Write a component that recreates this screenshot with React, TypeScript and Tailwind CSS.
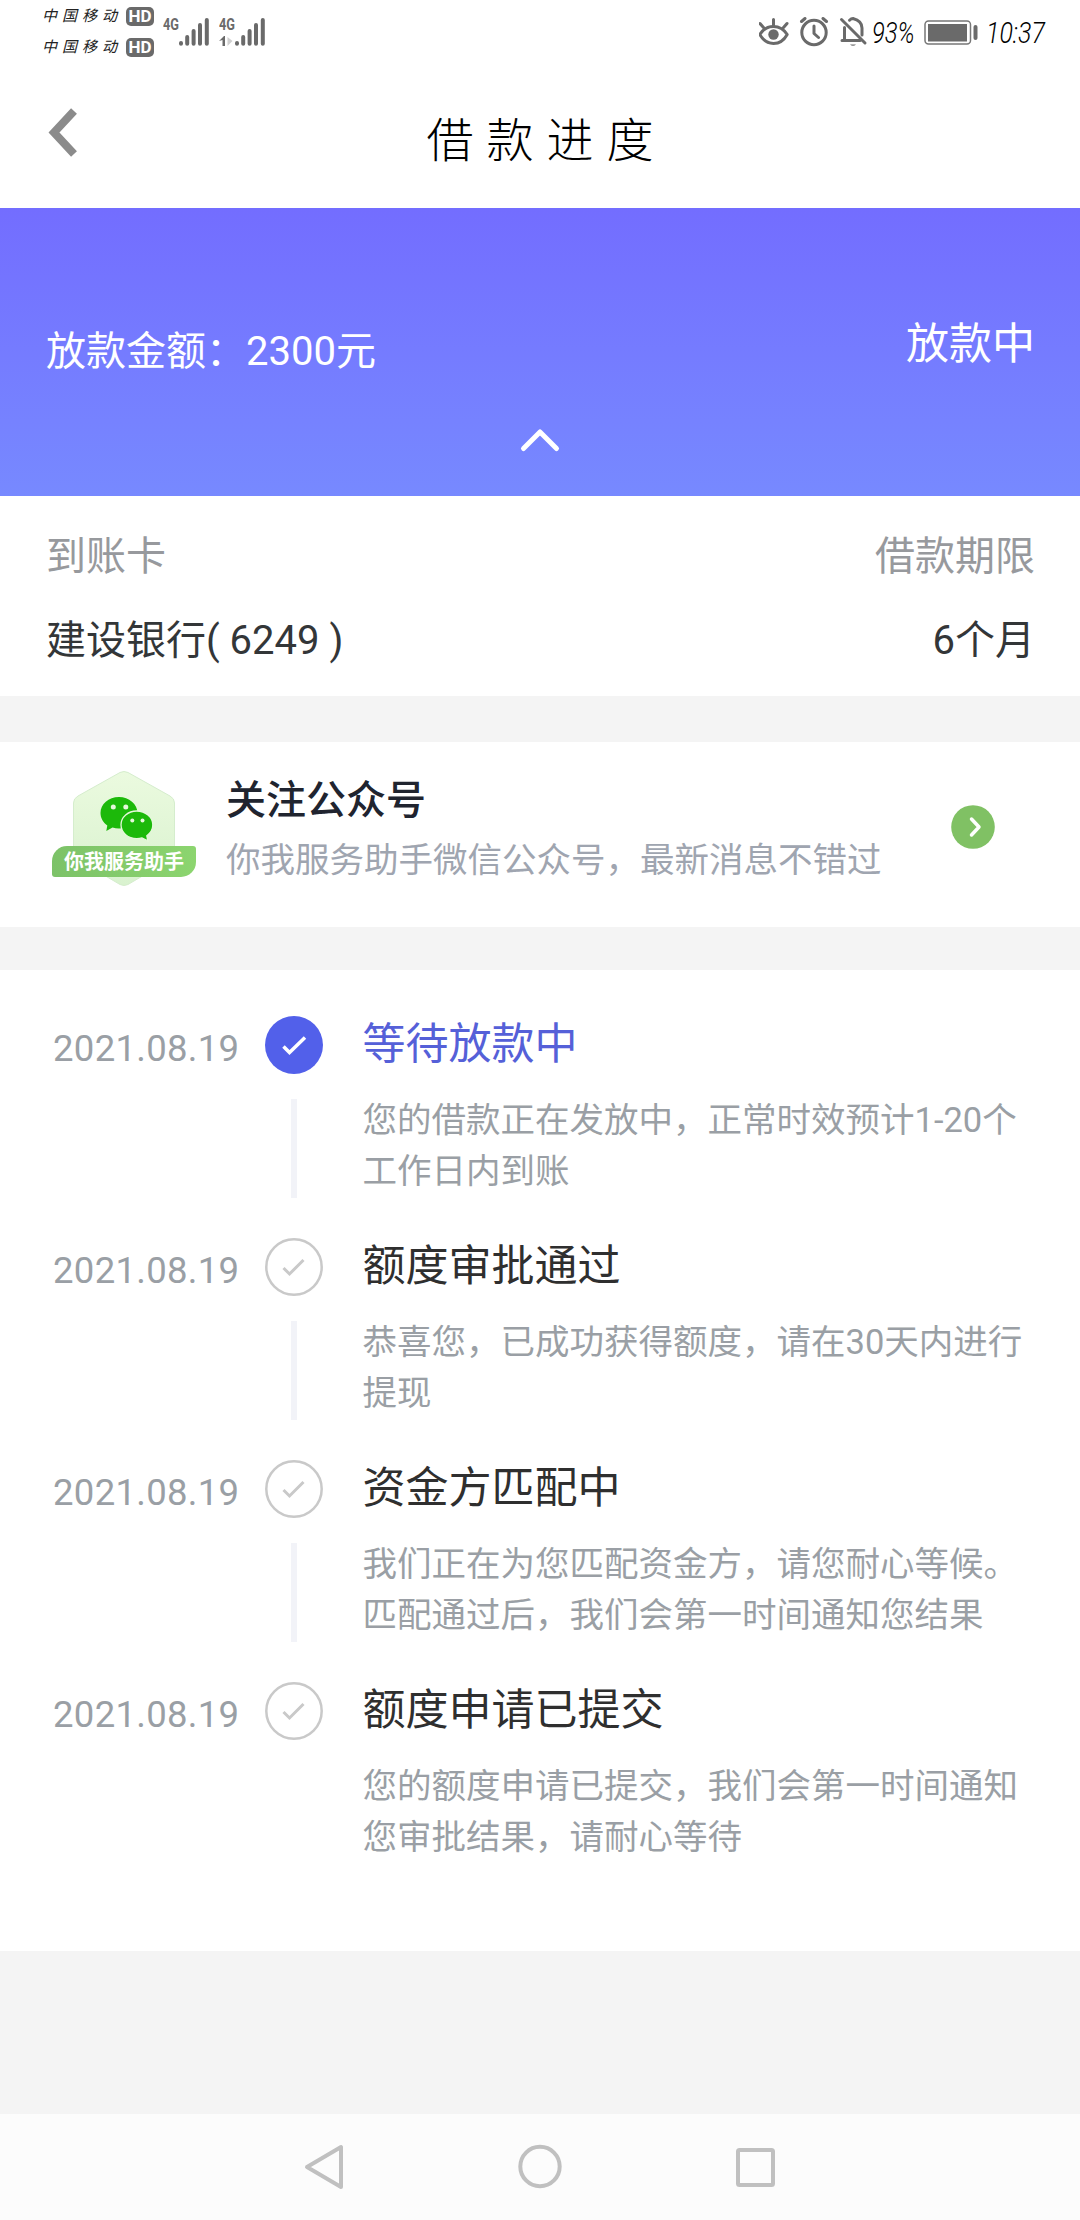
const steps = [
  { date: "2021.08.19", title: "等待放款中", lines: ["您的借款正在发放中，正常时效预计1-20个", "工作日内到账"], active: true },
  { date: "2021.08.19", title: "额度审批通过", lines: ["恭喜您，已成功获得额度，请在30天内进行", "提现"] },
  { date: "2021.08.19", title: "资金方匹配中", lines: ["我们正在为您匹配资金方，请您耐心等候。", "匹配通过后，我们会第一时间通知您结果"] },
  { date: "2021.08.19", title: "额度申请已提交", lines: ["您的额度申请已提交，我们会第一时间通知", "您审批结果，请耐心等待"] },
];

function Carrier() {
  return (
    <div className="flex h-[31px] items-center">
      <span className="w-[84px] text-[15px] leading-[31px] tracking-[5px] italic text-[#222] whitespace-nowrap">中国移动</span>
      <span className="flex h-[19px] w-7 items-center justify-center rounded-[5px] bg-[#6a6a6a] text-[17px] leading-none font-bold text-white">
        HD
      </span>
    </div>
  );
}

function Signal({ arrows = false }: { arrows?: boolean }) {
  return (
    <div className="relative h-[30px] w-[47px]">
      <span className="absolute left-0 top-0 origin-left scale-x-75 text-[17px] leading-[15px] font-bold text-[#6a6a6a]">4G</span>
      <svg className="block h-[30px] w-[47px]" viewBox="0 0 47 30" fill="none" stroke="#6a6a6a" strokeWidth="4" strokeLinecap="round">
        <path d="M18 26v.8M24.2 20v6.8M30.6 14v12.8M37 8v18.8M43.8 3v23.8" />
        {arrows && (
          <>
            <path d="M0 24l5-5h1v10H3.500v-6z" fill="#6a6a6a" stroke="none" />
            <path d="M8.500 20l5 4-5 5z" fill="#d0d0d0" stroke="none" />
          </>
        )}
      </svg>
    </div>
  );
}

function StatusBar() {
  return (
    <div className="flex h-16 items-start justify-between pl-[42px] pr-[36px]">
      <div className="flex">
        <div className="pt-[1px]">
          <Carrier />
          <Carrier />
        </div>
        <div className="flex gap-[9px] pl-[9px] pt-[17px]">
          <Signal />
          <Signal arrows />
        </div>
      </div>
      <div className="flex pt-[17px]">
        <svg className="h-[30px] w-[110px]" viewBox="1 0 110 30" fill="none" stroke="#6a6a6a" strokeWidth="3" strokeLinecap="round" strokeLinejoin="round">
          <path d="M1.800 17.500C5.500 11.800 10 9.500 15.500 9.500s10 2.300 13.700 8c-3.700 6.700-8.200 9-13.700 9s-10-2.300-13.700-9z" />
          <circle cx="15.500" cy="17.500" r="5.200" fill="#6a6a6a" stroke="none" />
          <path d="M15.500 2.500v6M2 6.500l3.500 4M29 6.500l-3.500 4" />
          <circle cx="56" cy="15.500" r="12.200" />
          <path d="M56 9v7.500l4.500 4M43.500 4.500l3.500-3M68.500 4.500l-3.500-3" />
          <path d="M83.500 2.500l23.500 23.500M84 23.500h18M86.500 23V10.500M91.500 3.200c1-1 2-1.700 3.500-1.700 5.500 1.500 9 5 9 9.500V18" />
          <path d="M92 27.500a4 4 0 0 0 6 0z" fill="#6a6a6a" stroke="none" />
        </svg>
        <span className="w-[46px] pl-[3px] text-[29px] leading-[32px]">
          <span className="block origin-left scale-x-[.82] font-light italic text-black">93%</span>
        </span>
        <svg className="ml-[9px] mt-[3px] h-[25px] w-[54px]" viewBox="0 0 54 25">
          <rect x="1" y="1" width="45.500" height="23" rx="3.500" fill="none" stroke="#777" strokeWidth="1.500" />
          <rect x="4" y="4" width="39" height="17.500" fill="#6a6a6a" />
          <rect x="49.500" y="5" width="4" height="15" rx="2" fill="#6a6a6a" />
        </svg>
        <span className="w-[66px] pl-[8px] text-[29px] leading-[32px]">
          <span className="block origin-left scale-x-[.86] font-light italic text-black">10:37</span>
        </span>
      </div>
    </div>
  );
}

function FollowBanner() {
  return (
    <section className="flex h-[185px] bg-white pl-[52px]">
      <div className="relative mt-[28px] h-[118px] w-36">
        <svg className="absolute left-0 top-0 h-[118px] w-36" viewBox="0 0 144 118">
          <defs>
            <linearGradient id="hex" x1="0" y1="0" x2="0" y2="1">
              <stop offset="0" stopColor="#ebfadf" />
              <stop offset="1" stopColor="#d9f2cf" />
            </linearGradient>
          </defs>
          <path d="M68 2.500q4-2 8 0l42 23.500q4.500 2.500 4.500 7v50q0 4-4 6.500L76 114.500q-4 2-8 0L25.500 89.500q-4-2.500-4-6.500V33q0-4.500 4.500-7z" fill="url(#hex)" stroke="#d5edcd" />
          <path d="M67 27c-10.500 0-18.500 7-18.500 16 0 5 2.600 9.500 6.800 12.500L54.300 61l6.200-3.400c2 .6 4.200.9 6.500.9 10 0 18.500-6.500 18.500-15.500S77 27 67 27z" fill="#1cb90a" />
          <path d="M84.700 41c-8.600 0-15.700 6-15.700 13.800s7.100 13.800 15.700 13.800c1.900 0 3.700-.2 5.300-.7l5.800 3-1-5.200c3.600-2.500 6-6.400 6-10.900C100.800 47 93.300 41 84.700 41z" fill="#1cb90a" stroke="#e6f8db" strokeWidth="1.300" />
          <g fill="#e6f8db">
            <circle cx="61.300" cy="37" r="2.500" />
            <circle cx="73.800" cy="37" r="2.500" />
            <circle cx="80.300" cy="50.500" r="2" />
            <circle cx="90.500" cy="50.500" r="2" />
          </g>
        </svg>
        <div className="absolute left-0 top-[76px] h-[31px] w-36 rounded-[3px] rounded-tl-[15px] rounded-br-[15px] bg-linear-to-r from-[#7cc268] to-[#8cd56f] text-center text-[20px] leading-[33px] font-bold text-white">
          你我服务助手
        </div>
      </div>
      <div className="w-[670px] pl-[30px] pt-[30px]">
        <h2 className="text-[40px] leading-[58px] font-medium text-[#20242f]">关注公众号</h2>
        <p className="text-[34.500px] leading-[60px] text-[#9fa5b0] whitespace-nowrap">你我服务助手微信公众号，最新消息不错过</p>
      </div>
      <svg className="ml-[85px] mt-[63px] size-[44px]" viewBox="0 0 44 44" fill="none">
        <circle cx="22" cy="22" r="21.800" fill="#80c164" />
        <path d="M20.500 14l7.500 8-7.500 8" stroke="#fff" strokeWidth="3.500" strokeLinecap="round" strokeLinejoin="round" />
      </svg>
    </section>
  );
}

function StepMark({ active }: { active?: boolean }) {
  return (
    <svg className="h-[58px] w-[58px]" viewBox="0 0 58 58" fill="none">
      {active ? (
        <>
          <circle cx="29" cy="29" r="29" fill="#5260ea" />
          <path d="M18.500 30.500l6 6L40 21.500" stroke="#fff" strokeWidth="3.500" />
        </>
      ) : (
        <>
          <circle cx="29" cy="29" r="27.700" stroke="#c9c9c9" strokeWidth="2.500" />
          <path d="M18.500 30l6 6L38.500 22" stroke="#c9c9c9" strokeWidth="3" />
        </>
      )}
    </svg>
  );
}

export default function App() {
  return (
    <div className="flex h-[2220px] w-[1080px] flex-col overflow-hidden bg-[#f4f4f4] font-['Roboto','Noto_Sans_CJK_SC',sans-serif]">
      <header className="h-[208px] bg-white">
        <StatusBar />
        <div className="flex h-36 items-start">
          <svg className="ml-[47px] mt-[43px] h-[52px] w-[32px]" viewBox="0 0 32 52" fill="none" stroke="#8b8b8b" strokeWidth="8">
            <path d="M27 4L7 25.500 27 47" />
          </svg>
          <h1 className="mr-[79px] mt-[42px] flex-1 text-center text-[47px] leading-[70px] font-light tracking-[13px] text-black indent-[13px]">
            借款进度
          </h1>
        </div>
      </header>

      <section className="flex h-72 flex-col items-center bg-linear-to-b from-[#736dff] to-[#7789ff] text-white">
        <div className="flex w-full items-start justify-between pl-[46px] pr-[45px] pt-[106px]">
          <span className="mt-[8px] text-[40px] leading-[60px]">放款金额：2300元</span>
          <span className="text-[43px] leading-[60px]">放款中</span>
        </div>
        <svg className="mt-[44px] h-[28px] w-[44px]" viewBox="0 0 44 28" fill="none" stroke="#fff" strokeWidth="5" strokeLinecap="round" strokeLinejoin="round">
          <path d="M5.500 22.500L22 6l16.500 16.500" />
        </svg>
      </section>

      <section className="h-[200px] bg-white pl-[46px] pr-[45px] pt-[28px] text-[40px]">
        <div className="flex justify-between leading-[66px] text-[#97999d]">
          <span>到账卡</span>
          <span>借款期限</span>
        </div>
        <div className="mt-[18px] flex justify-between leading-[66px] text-[#333638]">
          <span>建设银行( 6249 )</span>
          <span>6个月</span>
        </div>
      </section>

      <div className="h-[46px]" />
      <FollowBanner />
      <div className="h-[43px]" />

      <section className="h-[981px] bg-white pt-[46px]">
        {steps.map((step, i) => (
          <div key={step.title} className="flex h-[222px]">
            <div className="w-[212px] pl-[53px] pt-[3px] text-[36.500px] leading-[60px] tracking-[.3px] text-[#9a9fa5]">{step.date}</div>
            <div className="ml-[52.500px] flex w-[58px] flex-col items-center">
              <StepMark active={step.active} />
              {i < steps.length - 1 && <div className="mt-[25px] h-[99px] w-[6px] bg-[#f2f3f8]" />}
            </div>
            <div className="flex-1 pl-[40px]">
              <h3 className={step.active ? "text-[43px] leading-[57px] text-[#5560d8]" : "text-[43px] leading-[57px] text-[#2f2f2f]"}>
                {step.title}
              </h3>
              <div className="mt-[22px] text-[34.500px] leading-[51px] text-[#9a9fa5]">
                {step.lines.map((line) => (
                  <p key={line} className="whitespace-nowrap">{line}</p>
                ))}
              </div>
            </div>
          </div>
        ))}
      </section>

      <nav className="mt-auto flex h-[106px] items-center justify-center gap-[168px] bg-[#fcfcfc]">
        <svg className="size-12" viewBox="0 0 48 48" fill="none" stroke="#c0c0c0" strokeWidth="4" strokeLinejoin="round">
          <path d="M41 4v40L7 24z" />
        </svg>
        <svg className="size-12" viewBox="0 0 48 48" fill="none" stroke="#c0c0c0" strokeWidth="4">
          <circle cx="24" cy="23.500" r="19.700" />
        </svg>
        <svg className="size-12" viewBox="0 0 48 48" fill="none" stroke="#c0c0c0" strokeWidth="4">
          <rect x="6" y="7" width="35" height="35" rx="1.500" />
        </svg>
      </nav>
    </div>
  );
}
